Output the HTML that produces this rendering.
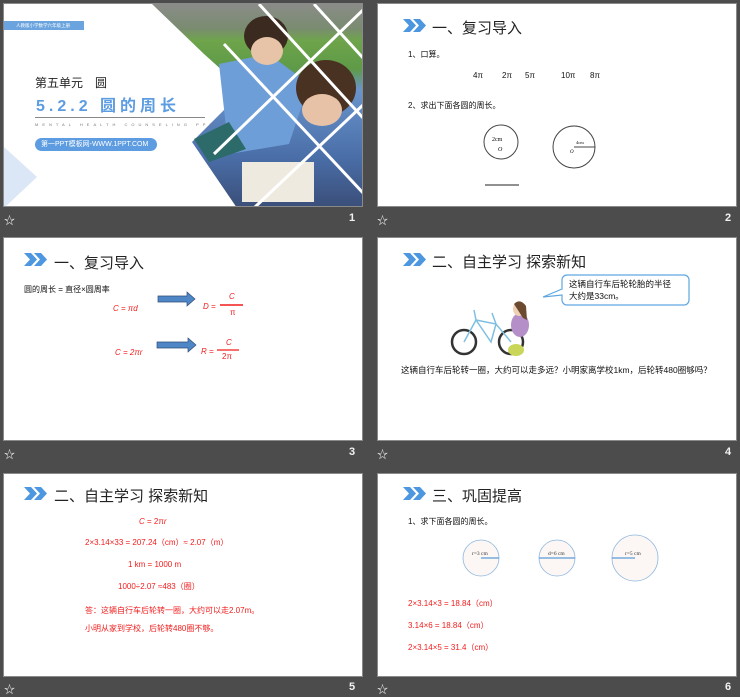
<!DOCTYPE html>
<html><head><meta charset="utf-8"><style>
*{margin:0;padding:0;box-sizing:border-box}
body{width:740px;height:696px;background:#4c4c4c;position:relative;overflow:hidden;font-family:"Liberation Sans","Noto Sans CJK SC",sans-serif}
.s{position:absolute;width:360px;height:204px;background:#fff;overflow:hidden;border:1px solid #8a8a8a}
.a{position:absolute;white-space:nowrap}
.t{font-size:15px;color:#222}
.r{color:#f21c1c;font-size:8px}
.sm{font-size:8px;color:#111}
.star{position:absolute;color:#eee;font-size:11px}
.num{position:absolute;color:#f2f2f2;font-size:11px;font-weight:bold}
.chev{position:absolute;width:24px;height:13px}
</style></head><body>

<!-- Slide 1 -->
<div class="s" style="left:3px;top:3px">
  <svg class="a" style="left:0;top:0" width="360" height="204">
    <defs><linearGradient id="g1" x1="0" y1="0" x2="0" y2="1">
      <stop offset="0" stop-color="#8a8c88"/><stop offset="0.12" stop-color="#7a8c70"/><stop offset="0.18" stop-color="#6ea44a"/><stop offset="0.32" stop-color="#5e9a48"/><stop offset="0.42" stop-color="#6a94cc"/><stop offset="0.75" stop-color="#4a6ea8"/><stop offset="1" stop-color="#3a4e78"/></linearGradient></defs>
    <polygon points="148,0 360,0 360,204 233,204 188,138 240,86 200,50" fill="url(#g1)"/>
    <path d="M215 60l50-10 40 30-20 60-60 10z" fill="#6e9ed8"/>
    <ellipse cx="262" cy="32" rx="22" ry="20" fill="#3a2a20"/>
    <ellipse cx="263" cy="47" rx="16" ry="14" fill="#e7c4a8"/>
    <ellipse cx="322" cy="84" rx="30" ry="28" fill="#4a3222"/>
    <ellipse cx="318" cy="106" rx="20" ry="16" fill="#e8c2a6"/>
    <rect x="238" y="158" width="72" height="40" fill="#efeae0"/>
    <polygon points="190,135 225,118 242,145 205,158" fill="#2d6a6a"/>
    <g stroke="#fff" stroke-width="3"><line x1="255" y1="0" x2="360" y2="115"/><line x1="360" y1="5" x2="210" y2="150"/><line x1="310" y1="0" x2="360" y2="55"/><line x1="220" y1="40" x2="360" y2="190"/><line x1="360" y1="100" x2="250" y2="204"/></g>
    <polygon points="0,143 33,173 0,204" fill="#dbe7f6"/>
  </svg>
  <div class="a" style="left:0;top:17px;width:80px;height:9px;background:#6aa3de;color:#fff;font-size:4.5px;line-height:9px;padding-left:12px">人教版小学数学六年级上册</div>
  <div class="a" style="left:31px;top:70px;font-size:12px;color:#222">第五单元　圆</div>
  <div class="a" style="left:32px;top:88px;font-size:16px;color:#5c9ce2;font-weight:bold;letter-spacing:4px">5.2.2 圆的周长</div>
  <div class="a" style="left:31px;top:113px;width:170px;height:1px;background:#888"></div>
  <div class="a" style="left:31px;top:118px;font-size:4px;color:#777;letter-spacing:4px">MENTAL HEALTH COUNSELING PPT</div>
  <div class="a" style="left:31px;top:134px;width:122px;height:13px;border-radius:7px;background:#5d9ce0;color:#fff;font-size:7px;line-height:13px;padding-left:6px">第一PPT模板网-WWW.1PPT.COM</div>
</div>
<div class="star" style="left:4px;top:212px">☆</div><div class="num" style="left:349px;top:212px">1</div>

<!-- Slide 2 -->
<div class="s" style="left:377px;top:3px">
  <svg class="chev" style="left:25px;top:15px" viewBox="0 0 24 13"><path d="M0 0h7l6 6.5-6 6.5H0l6-6.5z M10 0h7l6 6.5-6 6.5h-7l6-6.5z" fill="#4d97e0"/></svg>
  <div class="a t" style="left:54px;top:13px">一、复习导入</div>
  <div class="a sm" style="left:30px;top:45px">1、口算。</div>
  <div class="a sm" style="left:95px;top:67px">4π</div><div class="a sm" style="left:124px;top:67px">2π</div><div class="a sm" style="left:147px;top:67px">5π</div><div class="a sm" style="left:183px;top:67px">10π</div><div class="a sm" style="left:212px;top:67px">8π</div>
  <div class="a sm" style="left:30px;top:96px">2、求出下面各圆的周长。</div>
  <svg class="a" style="left:0;top:0" width="360" height="204">
    <circle cx="123" cy="138" r="17" fill="none" stroke="#444" stroke-width="1"/>
    <text x="114" y="137" font-size="6" font-family="Liberation Serif">2cm</text><text x="120" y="147" font-size="6" font-family="Liberation Serif" font-style="italic">O</text>
    <circle cx="196" cy="143" r="21" fill="none" stroke="#444" stroke-width="1"/>
    <line x1="196" y1="143" x2="217" y2="143" stroke="#444"/>
    <text x="198" y="140" font-size="4.5" font-family="Liberation Serif">4cm</text><text x="192" y="149" font-size="5" font-family="Liberation Serif" font-style="italic">O</text>
    <line x1="107" y1="181" x2="141" y2="181" stroke="#222"/>
  </svg>
</div>
<div class="star" style="left:377px;top:212px">☆</div><div class="num" style="left:725px;top:212px">2</div>

<!-- Slide 3 -->
<div class="s" style="left:3px;top:237px">
  <svg class="chev" style="left:20px;top:15px" viewBox="0 0 24 13"><path d="M0 0h7l6 6.5-6 6.5H0l6-6.5z M10 0h7l6 6.5-6 6.5h-7l6-6.5z" fill="#4d97e0"/></svg>
  <div class="a t" style="left:50px;top:14px">一、复习导入</div>
  <div class="a sm" style="left:20px;top:46px">圆的周长 = 直径×圆周率</div>
  <div class="a r" style="left:109px;top:66px;font-style:italic">C = πd</div>
  <div class="a r" style="left:111px;top:110px;font-style:italic">C = 2πr</div>
  <svg class="a" style="left:0;top:0" width="360" height="204">
    <path d="M154 58h29v-4l8 7-8 7v-4h-29z" fill="#4f86c6" stroke="#2f4f7a" stroke-width="0.7"/>
    <path d="M153 104h31v-4l8 7-8 7v-4h-31z" fill="#4f86c6" stroke="#2f4f7a" stroke-width="0.7"/>
    <line x1="216" y1="67" x2="239" y2="67" stroke="#f21c1c" stroke-width="1.5"/>
    <line x1="213" y1="112" x2="235" y2="112" stroke="#f21c1c" stroke-width="1.3"/>
  </svg>
  <div class="a r" style="left:199px;top:64px;font-style:italic">D =</div>
  <div class="a r" style="left:225px;top:54px;font-style:italic">C</div>
  <div class="a r" style="left:226px;top:70px">π</div>
  <div class="a r" style="left:197px;top:109px;font-style:italic">R =</div>
  <div class="a r" style="left:222px;top:100px;font-style:italic">C</div>
  <div class="a r" style="left:218px;top:114px">2π</div>
</div>
<div class="star" style="left:4px;top:446px">☆</div><div class="num" style="left:349px;top:446px">3</div>

<!-- Slide 4 -->
<div class="s" style="left:377px;top:237px">
  <svg class="chev" style="left:25px;top:15px" viewBox="0 0 24 13"><path d="M0 0h7l6 6.5-6 6.5H0l6-6.5z M10 0h7l6 6.5-6 6.5h-7l6-6.5z" fill="#4d97e0"/></svg>
  <div class="a t" style="left:54px;top:13px">二、自主学习 探索新知</div>
  <svg class="a" style="left:0;top:0" width="360" height="204">
    <path d="M189 37h117a5 5 0 0 1 5 5v20a5 5 0 0 1-5 5H189a5 5 0 0 1-5-5v-5l-19 2 19-8v-9a5 5 0 0 1 5-5z" fill="#fff" stroke="#5fa6e0" stroke-width="1.2"/>
    <circle cx="86" cy="104" r="12" fill="none" stroke="#333" stroke-width="2.5"/>
    <circle cx="133" cy="104" r="12" fill="none" stroke="#333" stroke-width="2.5"/>
    <path d="M86 104l12-22 20 4 15 18M98 82l15 22 5-18M96 72l2 10M114 75l4 11" fill="none" stroke="#7fbfe0" stroke-width="1.5"/>
    <ellipse cx="142" cy="87" rx="9" ry="12" fill="#b58fc8"/>
    <ellipse cx="141" cy="71" rx="6" ry="7" fill="#f0d0b5"/>
    <path d="M136 66q6-6 12 2l1 14-4-2z" fill="#6b4a30"/>
    <ellipse cx="138" cy="112" rx="8" ry="6" fill="#c9d65a"/>
  </svg>
  <div class="a sm" style="left:191px;top:40px;font-size:8.5px">这辆自行车后轮轮胎的半径</div>
  <div class="a sm" style="left:191px;top:52px;font-size:8.5px">大约是33cm。</div>
  <div class="a sm" style="left:23px;top:126px;font-size:8.5px">这辆自行车后轮转一圈，大约可以走多远？小明家离学校1km，后轮转480圈够吗？</div>
</div>
<div class="star" style="left:377px;top:446px">☆</div><div class="num" style="left:725px;top:446px">4</div>

<!-- Slide 5 -->
<div class="s" style="left:3px;top:473px">
  <svg class="chev" style="left:20px;top:13px" viewBox="0 0 24 13"><path d="M0 0h7l6 6.5-6 6.5H0l6-6.5z M10 0h7l6 6.5-6 6.5h-7l6-6.5z" fill="#4d97e0"/></svg>
  <div class="a t" style="left:50px;top:11px">二、自主学习 探索新知</div>
  <div class="a r" style="left:135px;top:43px"><i>C</i> = 2π<i>r</i></div>
  <div class="a r" style="left:81px;top:63px">2×3.14×33 = 207.24（cm）≈ 2.07（m）</div>
  <div class="a r" style="left:124px;top:86px">1 km = 1000 m</div>
  <div class="a r" style="left:114px;top:107px">1000÷2.07 ≈483（圈）</div>
  <div class="a r" style="left:81px;top:131px">答：这辆自行车后轮转一圈，大约可以走2.07m。</div>
  <div class="a r" style="left:81px;top:149px">小明从家到学校，后轮转480圈不够。</div>
</div>
<div class="star" style="left:4px;top:681px">☆</div><div class="num" style="left:349px;top:681px">5</div>

<!-- Slide 6 -->
<div class="s" style="left:377px;top:473px">
  <svg class="chev" style="left:25px;top:13px" viewBox="0 0 24 13"><path d="M0 0h7l6 6.5-6 6.5H0l6-6.5z M10 0h7l6 6.5-6 6.5h-7l6-6.5z" fill="#4d97e0"/></svg>
  <div class="a t" style="left:54px;top:11px">三、巩固提高</div>
  <div class="a sm" style="left:30px;top:42px">1、求下面各圆的周长。</div>
  <svg class="a" style="left:0;top:0" width="360" height="204">
    <g fill="#fcf7f5" stroke="#8db6de" stroke-width="0.8">
      <circle cx="103" cy="84" r="18"/><circle cx="179" cy="84" r="18"/><circle cx="257" cy="84" r="23"/></g>
    <g stroke="#5a9ad8" stroke-width="1.2"><line x1="103" y1="84" x2="121" y2="84"/><line x1="161" y1="84" x2="197" y2="84"/><line x1="234" y1="84" x2="257" y2="84"/></g>
    <g font-family="Liberation Serif" font-size="5.5" fill="#333">
      <text x="94" y="81">r=3 cm</text><text x="170" y="81">d=6 cm</text><text x="247" y="81">r=5 cm</text></g>
  </svg>
  <div class="a r" style="left:30px;top:124px">2×3.14×3 = 18.84（cm）</div>
  <div class="a r" style="left:30px;top:146px">3.14×6 = 18.84（cm）</div>
  <div class="a r" style="left:30px;top:168px">2×3.14×5 = 31.4（cm）</div>
</div>
<div class="star" style="left:377px;top:681px">☆</div><div class="num" style="left:725px;top:681px">6</div>

</body></html>
